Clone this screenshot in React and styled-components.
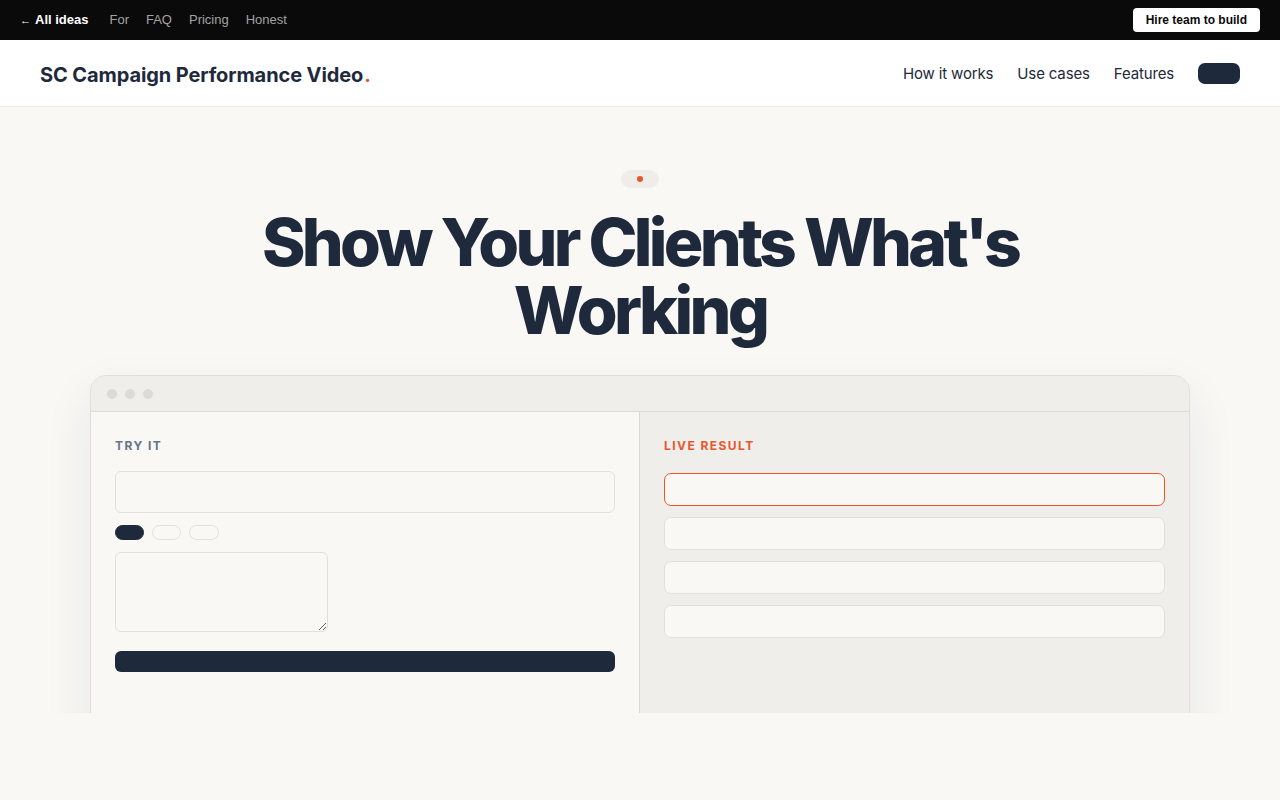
import React from 'react';
import styled, { createGlobalStyle } from 'styled-components';

const GlobalStyle = createGlobalStyle`
  html, body {
    margin: 0;
    padding: 0;
    background: #f9f8f5;
    font-family: "Inter", "Liberation Sans", sans-serif;
    color: #1e293b;
  }
  * { box-sizing: border-box; }
`;

const TopBar = styled.div`
  height: 40px;
  background: #0a0a0a;
  display: flex;
  align-items: center;
  justify-content: space-between;
  padding: 0 20px 1px;
  font-family: "Liberation Sans", Arial, sans-serif;
  font-size: 13px;
`;

const TopLinks = styled.div`
  display: flex;
  align-items: center;
  gap: 17px;
`;

const BackLink = styled.a`
  color: #fff;
  font-weight: 700;
  margin-right: 4px;
  text-decoration: none;
  span { font-weight: 400; font-size: 11px; margin-right: 4px; }
`;

const TopLink = styled.a`
  color: #a3a3a3;
  text-decoration: none;
`;

const HireButton = styled.button`
  background: #fff;
  color: #0a0a0a;
  border: none;
  border-radius: 4px;
  height: 24px;
  padding: 0 13px;
  font-family: "Liberation Sans", Arial, sans-serif;
  font-weight: 700;
  font-size: 12px;
`;

const Nav = styled.header`
  height: 67px;
  background: #fff;
  border-bottom: 1px solid #ebe9e4;
  display: flex;
  align-items: center;
  justify-content: space-between;
  padding: 0 40px;
`;

const Logo = styled.div`
  margin-top: 3px;
  font-size: 20px;
  font-weight: 700;
  letter-spacing: -0.005em;
  color: #1e293b;
  span { color: #e8572a; margin-left: 1px; }
`;

const NavLinks = styled.nav`
  display: flex;
  align-items: center;
  gap: 24px;
`;

const NavLink = styled.a`
  font-size: 15px;
  color: #1e293b;
  letter-spacing: -0.01em;
  text-decoration: none;
`;

const NavButton = styled.button`
  width: 42px;
  height: 21px;
  border: none;
  border-radius: 7px;
  background: #1e293b;
`;

const Hero = styled.section`
  height: 606px;
  overflow: hidden;
  display: flex;
  flex-direction: column;
  align-items: center;
  padding-top: 63px;
  & > * { flex-shrink: 0; }
`;

const Pill = styled.div`
  width: 38px;
  height: 18px;
  border-radius: 9px;
  background: #efede9;
  display: flex;
  align-items: center;
  justify-content: center;
  &::after {
    content: '';
    width: 6px;
    height: 6px;
    border-radius: 50%;
    background: #e8572a;
  }
`;

const Title = styled.h1`
  margin: 20px 0 0;
  font-size: 66px;
  line-height: 68px;
  font-weight: 800;
  letter-spacing: -0.056em;
  text-align: center;
  color: #1e293b;
  max-width: 800px;
`;

const Frame = styled.div`
  margin-top: 31px;
  width: 1100px;
  border: 1px solid #e0ded9;
  border-radius: 16px;
  background: #f9f8f5;
  box-shadow: 0 20px 50px rgba(30, 41, 59, 0.08);
  overflow: hidden;
`;

const TitleBar = styled.div`
  height: 36px;
  background: #efeeea;
  border-bottom: 1px solid #dcdad5;
  display: flex;
  align-items: center;
  gap: 8px;
  padding-left: 16px;
`;

const Dot = styled.i`
  width: 10px;
  height: 10px;
  border-radius: 50%;
  background: #dddbd7;
`;

const Body = styled.div`
  display: grid;
  grid-template-columns: 548px 1fr;
  height: 360px;
`;

const Panel = styled.div`
  padding: 26px 24px;
  background: ${p => (p.$alt ? '#efeeea' : '#f9f8f5')};
  border-left: ${p => (p.$alt ? '1px solid #dcdad5' : 'none')};
  display: flex;
  flex-direction: column;
`;

const Label = styled.div`
  font-size: 12px;
  font-weight: 700;
  letter-spacing: 0.12em;
  color: ${p => (p.$accent ? '#e8572a' : '#64748b')};
  margin-bottom: 18px;
`;

const Input = styled.div`
  height: 42px;
  width: 500px;
  border: 1px solid #e2e0db;
  border-radius: 6px;
  background: #f9f8f5;
`;

const Chips = styled.div`
  display: flex;
  gap: 8px;
  margin-top: 12px;
`;

const Chip = styled.div`
  width: ${p => p.$w}px;
  height: 15px;
  border-radius: 8px;
  background: ${p => (p.$on ? '#1e293b' : 'transparent')};
  border: 1px solid ${p => (p.$on ? '#1e293b' : '#e2e0db')};
`;

const TextArea = styled.textarea`
  margin-top: 12px;
  width: 213px;
  height: 80px;
  border: 1px solid #e2e0db;
  border-radius: 6px;
  background: #f9f8f5;
  resize: both;
  outline: none;
`;

const Submit = styled.button`
  margin-top: 19px;
  width: 500px;
  height: 21px;
  border: none;
  border-radius: 6px;
  background: #1e293b;
`;

const Results = styled.div`
  display: flex;
  flex-direction: column;
  gap: 11px;
  margin-top: 2px;
`;

const Result = styled.div`
  height: 33px;
  border-radius: 7px;
  background: #f9f8f5;
  border: 1px solid ${p => (p.$active ? '#e8572a' : '#e2e0db')};
`;

export default function App() {
  return (
    <>
      <GlobalStyle />
      <TopBar>
        <TopLinks>
          <BackLink href="#"><span>←</span>All ideas</BackLink>
          <TopLink href="#">For</TopLink>
          <TopLink href="#">FAQ</TopLink>
          <TopLink href="#">Pricing</TopLink>
          <TopLink href="#">Honest</TopLink>
        </TopLinks>
        <HireButton>Hire team to build</HireButton>
      </TopBar>
      <Nav>
        <Logo>SC Campaign Performance Video<span>.</span></Logo>
        <NavLinks>
          <NavLink href="#">How it works</NavLink>
          <NavLink href="#">Use cases</NavLink>
          <NavLink href="#">Features</NavLink>
          <NavButton />
        </NavLinks>
      </Nav>
      <Hero>
        <Pill />
        <Title>Show Your Clients What's Working</Title>
        <Frame>
          <TitleBar>
            <Dot /><Dot /><Dot />
          </TitleBar>
          <Body>
            <Panel>
              <Label>TRY IT</Label>
              <Input />
              <Chips>
                <Chip $on $w={29} />
                <Chip $w={29} />
                <Chip $w={30} />
              </Chips>
              <TextArea />
              <Submit />
            </Panel>
            <Panel $alt>
              <Label $accent>LIVE RESULT</Label>
              <Results>
                <Result $active />
                <Result />
                <Result />
                <Result />
              </Results>
            </Panel>
          </Body>
        </Frame>
      </Hero>
    </>
  );
}
